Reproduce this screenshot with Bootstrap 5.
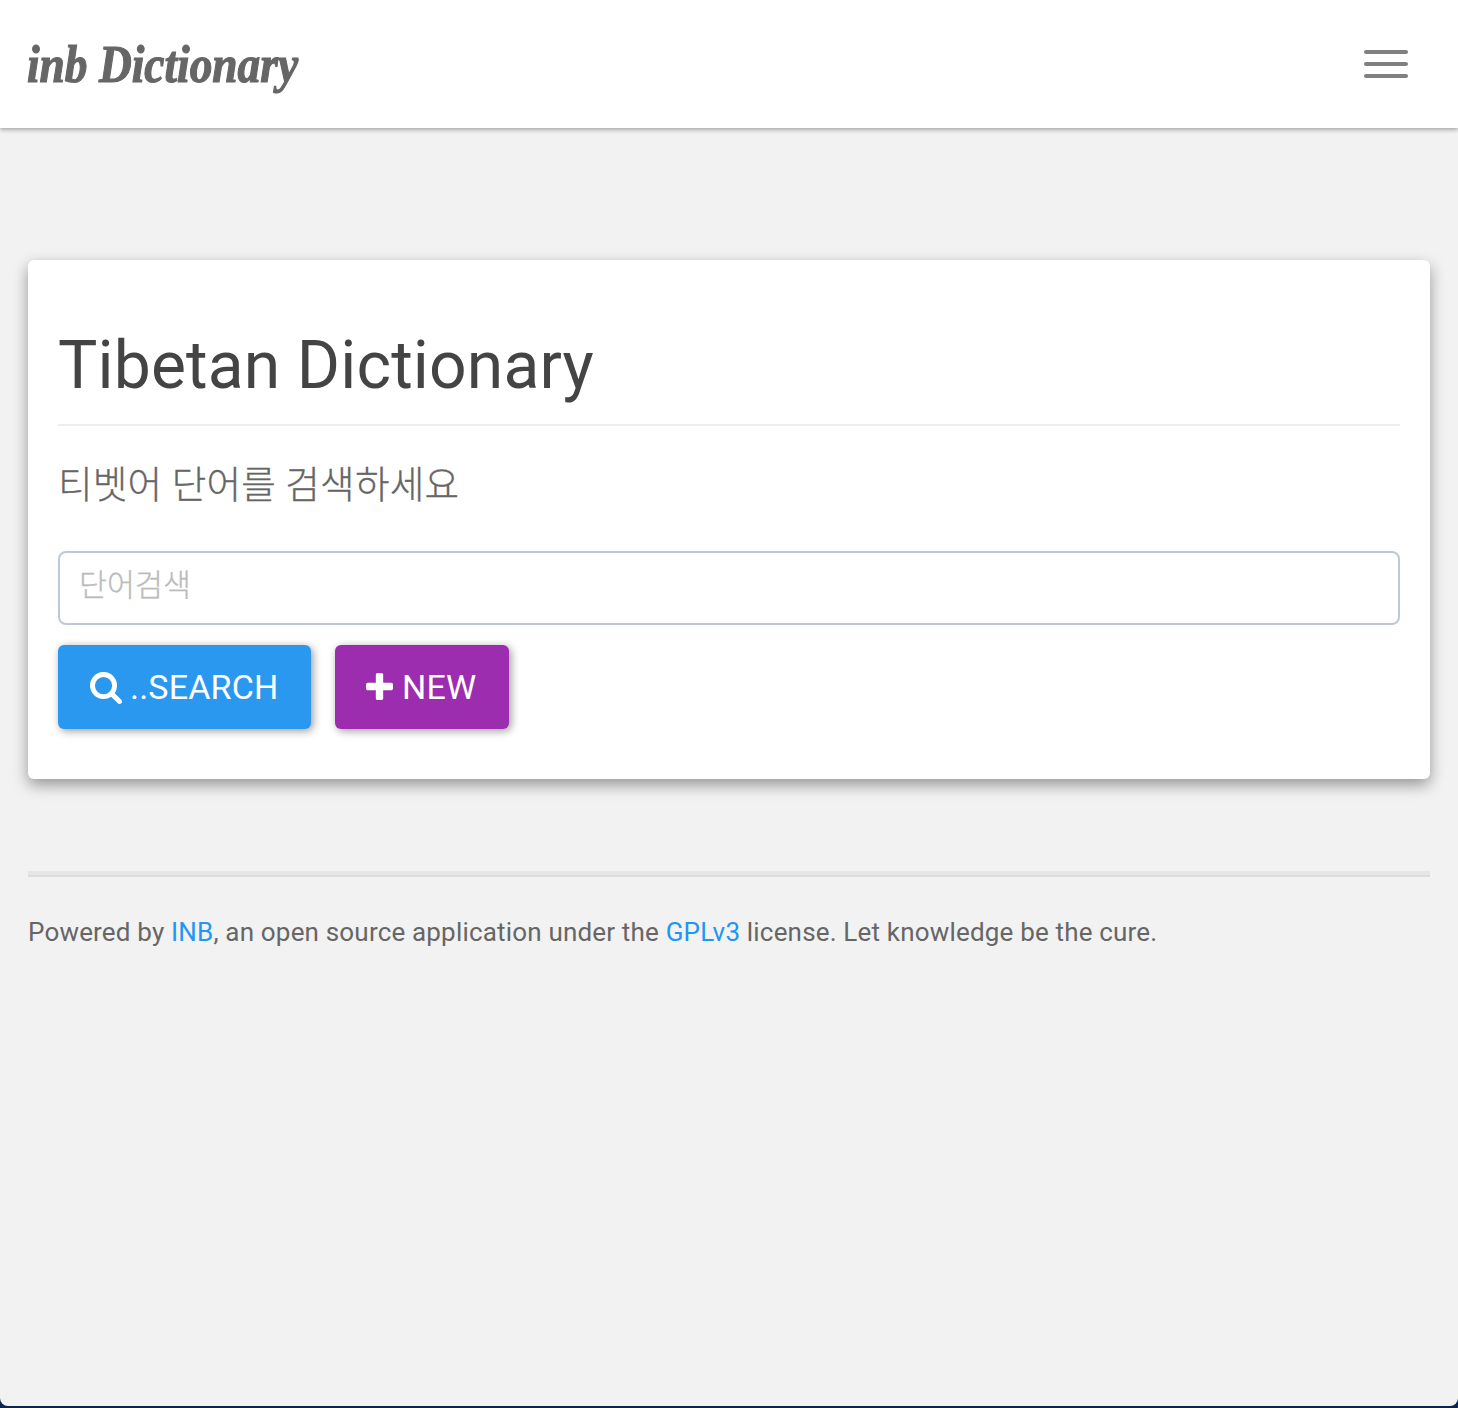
<!DOCTYPE html>
<html lang="ko">
<head>
<meta charset="utf-8">
<meta name="viewport" content="width=device-width, initial-scale=1">
<title>inb Dictionary</title>
<link href="https://cdn.jsdelivr.net/npm/bootstrap@5.3.0/dist/css/bootstrap.min.css" rel="stylesheet">
<style>
html{background:#0c2450}
body{background:#0c2450;color:#666;font-family:Roboto,"Noto Sans CJK KR",sans-serif;font-size:26px;line-height:48px;letter-spacing:.18px}
.page{min-height:1406px;background:#f2f2f2;border-radius:0 0 8px 8px;overflow:hidden}
.topbar{height:128px;padding:0 28px;background:#fff;box-shadow:0 2px 4px rgba(0,0,0,.3)}
.brand-name{font:italic 700 52px/60px "Liberation Serif",serif;letter-spacing:0;color:#666;-webkit-text-stroke:1.2px #666;margin:2px 0 0 -1px;padding:0;transform:scaleX(.873);transform-origin:left center}
.brand-name:hover{color:#666}
.menu-btn{width:88px;height:68px;border:0;background:none;padding:20px 22px;gap:8px;border-radius:6px}
.menu-line{width:44px;height:4px;border-radius:2px;background:gray}
.main-area{padding:132px 28px 0}
.search-box{height:519px;padding:63px 30px 0;border:0;border-radius:6px;box-shadow:0 6px 15px rgba(0,0,0,.38)}
.page-title{font-size:66px;font-weight:400;line-height:84px;color:#444;letter-spacing:.13px;height:103px;padding-top:1px;margin:0 0 28px;border-bottom:2px solid #eee}
.intro{font-size:37.6px;line-height:60px;font-weight:300;letter-spacing:.2px;-webkit-text-stroke:.3px #666;margin:1px 0 36px}
.word-input{height:74px;border:2px solid #bdc9d7;border-radius:8px;padding:0 20px 6px 19px;font-size:30.4px;font-weight:300;background:#fff}
.word-input::placeholder{color:#bbb;opacity:1;-webkit-text-stroke:.3px #bbb}
.actions{gap:24px;margin-top:20px}
.act{height:84px;border:0;border-radius:6px;padding:0 32px;font-size:34px;line-height:48px;color:#fff;letter-spacing:.2px;box-shadow:2px 2px 8px rgba(0,0,0,.4);gap:9px}
.act-search,.act-search:hover{background:#2b98f0;color:#fff}
.act-search{width:253px;gap:8px}
.act-search svg{margin-top:2px}
.act-new,.act-new:hover{background:#9b2dae;color:#fff}
.act-new{width:174px;padding-left:31px}
.act-new svg{margin-bottom:2px}
.foot{margin-top:92px}
.foot-line{height:6px;background:#e6e6e6;border-bottom:2px solid #dcdcdc;margin-bottom:31px}
.foot a{color:#2196f3;text-decoration:none}
</style>
<script src="https://cdn.jsdelivr.net/npm/bootstrap@5.3.0/dist/js/bootstrap.bundle.min.js"></script>
</head>
<body>
<div class="page">
  <nav class="topbar d-flex align-items-center justify-content-between">
    <a class="brand-name text-decoration-none" href="#">inb Dictionary</a>
    <button class="menu-btn d-flex flex-column" type="button" aria-label="Menu">
      <span class="menu-line"></span><span class="menu-line"></span><span class="menu-line"></span>
    </button>
  </nav>
  <main class="main-area">
    <section class="search-box card">
      <h1 class="page-title">Tibetan Dictionary</h1>
      <p class="intro">티벳어 단어를 검색하세요</p>
      <form>
        <input class="word-input form-control" type="text" placeholder="단어검색">
        <div class="actions d-flex">
          <button class="act act-search btn d-flex align-items-center" type="button">
            <svg width="32" height="32" viewBox="64 128 1664 1664" fill="currentColor"><path d="M1216 832q0-185-131.500-316.500t-316.500-131.500-316.500 131.500-131.500 316.500 131.500 316.500 316.500 131.500 316.500-131.500 131.500-316.500zm512 832q0 52-38 90t-90 38q-54 0-90-38l-343-343q-179 124-399 124-143 0-273.500-55.500t-225-150-150-225-55.500-273.500 55.500-273.500 150-225 225-150 273.500-55.500 273.500 55.500 225 150 150 225 55.500 273.500q0 220-124 399l343 343q37 37 37 90z"/></svg>
            <span>..SEARCH</span>
          </button>
          <button class="act act-new btn d-flex align-items-center" type="button">
            <svg width="27" height="27" viewBox="192 128 1408 1408" fill="currentColor"><path d="M1600 736v192q0 40-28 68t-68 28h-416v416q0 40-28 68t-68 28h-192q-40 0-68-28t-28-68v-416h-416q-40 0-68-28t-28-68v-192q0-40 28-68t68-28h416v-416q0-40 28-68t68-28h192q40 0 68 28t28 68v416h416q40 0 68 28t28 68z"/></svg>
            <span>NEW</span>
          </button>
        </div>
      </form>
    </section>
    <footer class="foot">
      <div class="foot-line"></div>
      <p class="mb-0">Powered by <a href="#">INB</a>, an open source application under the <a href="#">GPLv3</a> license. Let knowledge be the cure.</p>
    </footer>
  </main>
</div>
</body>
</html>
